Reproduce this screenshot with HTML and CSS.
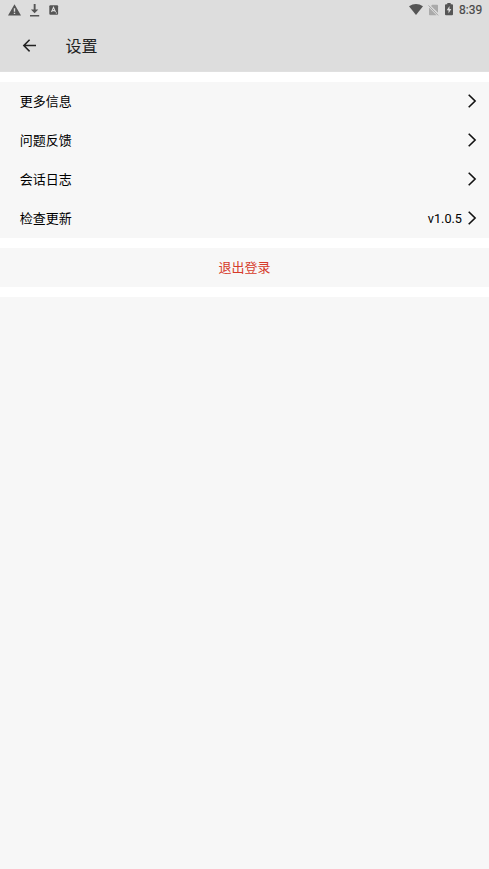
FILE: index.html
```html
<!DOCTYPE html>
<html lang="zh-CN">
<head>
<meta charset="utf-8">
<title>设置</title>
<link rel="stylesheet" href="styles.css">
</head>
<body>
<header class="top">
  <div class="status">
    <div class="status-left">
      <svg width="13" height="12" viewBox="0 0 13 12"><path fill="#555" fill-rule="evenodd" d="M6.5 .3 13 11.5H0zM5.8 4.3v3.4h1.4V4.3zM5.8 8.7v1.3h1.4V8.7z"/></svg>
      <svg width="10" height="13" viewBox="0 0 10 13"><path fill="#555" d="M3.7 0h1.9v5.6h2.7L4.6 9.2 .9 5.6h2.8zM0 11h9.2v1.4H0z"/></svg>
      <svg width="10" height="10" viewBox="0 0 10 10"><rect x=".3" y=".2" width="8.8" height="9.6" rx="1" fill="#555"/><path d="M2.5 7 4.5 2.3 6.5 7M3.3 5.6h2.4M6.8 8h1.2" fill="none" stroke="#ddd" stroke-width="1.1"/></svg>
    </div>
    <div class="status-right">
      <svg class="wifi" width="14" height="11" viewBox="0 0 14 11"><path fill="#555" d="M0 2.2Q7-2.2 14 2.2L7 11z"/></svg>
      <svg class="sim" width="11" height="12" viewBox="0 0 11 12"><path fill="#aaa" d="M4.2 .8h5q.8 0 .8.8v7.2L3 1.9zM1 3.6 8.6 11.3H1.8q-.8 0-.8-.8z"/><path d="M.5 1.4 10.2 11.4" stroke="#a2a2a2" stroke-width=".9"/></svg>
      <svg class="battery" width="8" height="13" viewBox="0 0 8 13"><path fill="#555" fill-rule="evenodd" d="M2.3 0h3.4v1.2H7q1 0 1 1v9q0 1-1 1H1q-1 0-1-1v-9q0-1 1-1h1.3zM4.5 3 1.7 7.2h1.8v3.2l2.8-4.3H4.5z"/></svg>
      <span class="clock">8:39</span>
    </div>
  </div>
  <div class="bar">
    <svg class="back" width="14" height="14" viewBox="0 0 14 14"><path d="M14 6.6H1.9M7.6 .8 1.8 6.6 7.6 12.4" fill="none" stroke="#222" stroke-width="1.5"/></svg>
    <h1 class="title">设置</h1>
  </div>
</header>
<main>
  <section class="group">
    <div class="row"><span>更多信息</span><svg class="chevron" width="9" height="14" viewBox="0 0 9 14"><path d="M.7 .8 7.1 7 .7 13.2"/></svg></div>
    <div class="row"><span>问题反馈</span><svg class="chevron" width="9" height="14" viewBox="0 0 9 14"><path d="M.7 .8 7.1 7 .7 13.2"/></svg></div>
    <div class="row"><span>会话日志</span><svg class="chevron" width="9" height="14" viewBox="0 0 9 14"><path d="M.7 .8 7.1 7 .7 13.2"/></svg></div>
    <div class="row"><span>检查更新</span><span class="version">v1.0.5</span><svg class="chevron" width="9" height="14" viewBox="0 0 9 14"><path d="M.7 .8 7.1 7 .7 13.2"/></svg></div>
  </section>
  <section class="group logout">退出登录</section>
  <div class="rest"></div>
</main>
</body>
</html>
```
FILE: styles.css
```css
* { box-sizing: border-box; }
body {
  margin: 0;
  height: 869px;
  display: flex;
  flex-direction: column;
  overflow: hidden;
  background: #fff;
  color: #000;
  font: 13px/20px Roboto, "Noto Sans CJK SC", sans-serif;
}
svg { display: block; flex: none; }
.top { height: 72px; background: #ddd; border-bottom: 1px solid #e0e0e0; }
.status { height: 20px; display: flex; justify-content: space-between; padding: 0 7px 0 8px; }
.status-left, .status-right { display: flex; align-items: center; }
.status-left { gap: 9px; }
.wifi { margin-right: 5px; margin-bottom: 1px; }
.sim { margin-right: 6px; margin-bottom: 1px; }
.battery { margin-right: 6px; margin-bottom: 2px; }
.clock { font-size: 12px; font-weight: 400; color: #444; width: 23px; white-space: nowrap; -webkit-text-stroke: .2px #555; }
.bar { height: 51px; display: flex; align-items: center; padding-left: 22px; }
.title { margin: 0 0 0 29.5px; padding-top: 2px; font-size: 16px; line-height: 24px; font-weight: 400; color: #222; }
main { flex: 1; display: flex; flex-direction: column; gap: 10px; padding-top: 10px; }
.group { background: #f7f7f7; }
.row { height: 39px; display: flex; align-items: center; padding: 0 12px 0 19.7px; }
.row .chevron { margin-left: auto; margin-bottom: 2px; }
.row .version { margin-left: auto; font-size: 12.7px; }
.row .version + .chevron { margin-left: 6px; }
.chevron { fill: none; stroke: #111; stroke-width: 1.6; }
.logout { height: 39px; line-height: 39px; text-align: center; color: #d63b2a; }
.rest { flex: 1; background: #f7f7f7; }
```
